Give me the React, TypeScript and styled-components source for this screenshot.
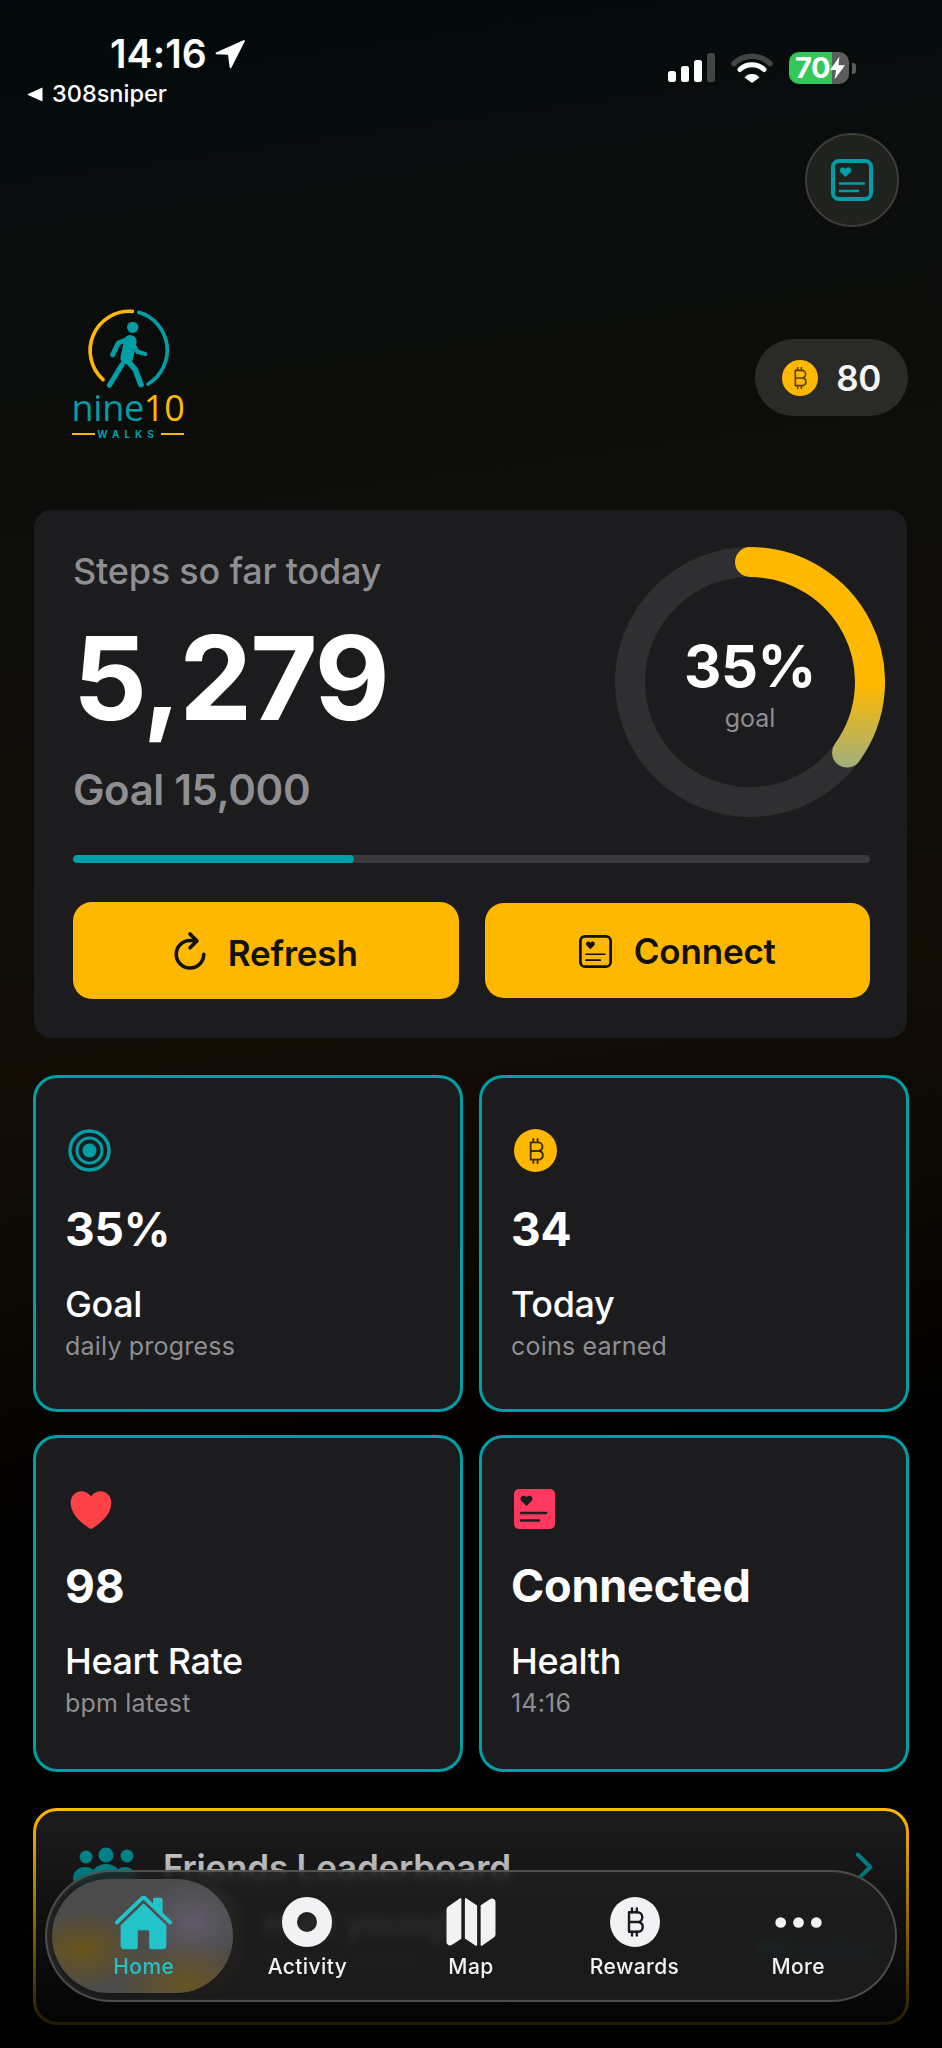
import React from "react";
import styled, { createGlobalStyle } from "styled-components";
import { IoHome, IoMap, IoEllipsisHorizontal, IoChevronForward, IoHeart } from "react-icons/io5";

const TEAL = "#009EA6";
const YELLOW = "#FFB800";
const CARD = "#1C1C1E";
const GREY = "#8E8E93";

const Global = createGlobalStyle`
  html, body { margin: 0; padding: 0; background: #000; }
  body { font-family: Inter, "Liberation Sans", sans-serif; color: #fff; }
  * { box-sizing: border-box; }
`;

const Page = styled.div`
  position: relative;
  width: 942px;
  height: 2048px;
  overflow: hidden;
  background: linear-gradient(172deg, #020a0d 0%, #0a0d0c 14%, #0d0d0a 26%, #120d05 50%, #0c0803 60%, #000 72%);
`;

/* status bar */
const StatusBar = styled.div`
  display: flex;
  justify-content: space-between;
  height: 110px;
  padding: 34px 86px 0 27px;
`;
const StatusLeft = styled.div`
  display: flex;
  flex-direction: column;
`;
const TimeRow = styled.div`
  display: flex;
  align-items: center;
  gap: 8px;
  margin-left: 83px;
  height: 40px;
  font-size: 39px;
  font-weight: 600;
  letter-spacing: 0.1px;
  line-height: 40px;
`;
const BackRow = styled.div`
  display: flex;
  align-items: center;
  gap: 9px;
  margin-top: 7px;
  height: 26px;
  font-size: 23.5px;
  font-weight: 500;
  line-height: 26px;
`;
const StatusRight = styled.div`
  display: flex;
  align-items: center;
  gap: 16px;
  height: 32px;
  margin-top: 18px;
`;
const BatteryWrap = styled.div`
  display: flex;
  align-items: center;
  gap: 3px;
`;
const BatteryBody = styled.div`
  display: flex;
  align-items: center;
  width: 60px;
  height: 32px;
  padding-left: 6px;
  border-radius: 10px;
  background: linear-gradient(90deg, #34c759 0 43px, #5c5c5c 43px);
  font-size: 29px;
  font-weight: 700;
  letter-spacing: -0.5px;
  line-height: 32px;
`;
const BatteryNub = styled.div`
  width: 4px;
  height: 11px;
  border-radius: 0 3px 3px 0;
  background: #5c5c5c;
`;

/* header */
const TopActions = styled.div`
  display: flex;
  justify-content: flex-end;
  margin-top: 23px;
  padding-right: 43px;
`;
const RoundButton = styled.div`
  display: flex;
  align-items: center;
  justify-content: center;
  width: 94px;
  height: 94px;
  border-radius: 50%;
  background: #20221f;
  border: 2px solid #3d3e38;
`;
const BrandRow = styled.div`
  display: flex;
  justify-content: space-between;
  align-items: flex-start;
  margin-top: 81px;
  padding: 0 34px 0 72px;
  height: 127px;
`;
const Logo = styled.div`
  display: flex;
  flex-direction: column;
  align-items: center;
  width: 112px;
`;
const LogoWord = styled.div`
  margin-top: 2px;
  height: 36px;
  font-family: "Open Sans", Inter, sans-serif;
  font-size: 36px;
  font-weight: 500;
  letter-spacing: -0.3px;
  line-height: 36px;
  color: ${TEAL};
  white-space: nowrap;
`;
const LogoAccent = styled.span`
  color: ${YELLOW};
`;
const LogoTag = styled.div`
  display: flex;
  align-items: center;
  justify-content: space-between;
  width: 112px;
  height: 10px;
  margin-top: 3px;
  font-size: 10px;
  font-weight: 700;
  letter-spacing: 5px;
  line-height: 10px;
  color: ${TEAL};
  &::before, &::after {
    content: "";
    width: 23px;
    height: 2px;
    background: ${YELLOW};
  }
`;
const CoinPill = styled.div`
  display: flex;
  align-items: center;
  gap: 18px;
  height: 77px;
  margin-top: 31px;
  padding: 0 27px 0 27px;
  border-radius: 39px;
  background: #2a2a28;
  font-size: 35px;
  font-weight: 600;
  letter-spacing: -0.4px;
  color: #f5f5f5;
`;
const Coin = styled.div<{ $size: number; $bg: string }>`
  display: flex;
  align-items: center;
  justify-content: center;
  flex: none;
  width: ${(p) => p.$size}px;
  height: ${(p) => p.$size}px;
  border-radius: 50%;
  background: ${(p) => p.$bg};
`;

/* hero */
const Hero = styled.section`
  margin: 75px 35px 0 34px;
  padding: 37px 37px 39px 39px;
  border-radius: 18px;
  background: ${CARD};
`;
const HeroTop = styled.div`
  display: flex;
  justify-content: space-between;
  height: 270px;
`;
const HeroText = styled.div`
  display: flex;
  flex-direction: column;
  padding-top: 4px;
`;
const StepsLabel = styled.div`
  font-size: 36px;
  font-weight: 500;
  line-height: 40px;
  letter-spacing: -0.2px;
  color: ${GREY};
`;
const StepsValue = styled.div`
  margin-top: 22px;
  font-size: 116px;
  font-weight: 700;
  line-height: 130px;
  letter-spacing: -2px;
`;
const StepsGoal = styled.div`
  margin-top: 22px;
  font-size: 42px;
  font-weight: 600;
  line-height: 50px;
  letter-spacing: -0.4px;
  color: ${GREY};
`;
const Ring = styled.div`
  display: grid;
  place-items: center;
  width: 270px;
  height: 270px;
  margin-right: -15px;
  & > * { grid-area: 1 / 1; }
`;
const RingCenter = styled.div`
  display: flex;
  flex-direction: column;
  align-items: center;
  margin-top: 3px;
`;
const RingValue = styled.div`
  font-size: 58px;
  font-weight: 700;
  line-height: 64px;
  letter-spacing: -0.5px;
`;
const RingLabel = styled.div`
  margin-top: 5px;
  font-size: 25px;
  font-weight: 400;
  line-height: 30px;
  color: ${GREY};
`;
const Progress = styled.div`
  height: 8px;
  margin-top: 38px;
  border-radius: 4px;
  background: #3a3a3c;
  overflow: hidden;
`;
const ProgressFill = styled.div`
  height: 100%;
  background: ${TEAL};
  border-radius: 4px;
`;
const Actions = styled.div`
  display: grid;
  grid-template-columns: 1fr 1fr;
  align-items: center;
  gap: 26px;
  margin-top: 39px;
`;
const ActionButton = styled.div<{ $height: number; $drop: number }>`
  display: flex;
  align-items: center;
  justify-content: center;
  gap: 22px;
  height: ${(p) => p.$height}px;
  padding-top: ${(p) => p.$drop}px;
  border-radius: 19px;
  background: ${YELLOW};
  color: #111;
  font-size: 35px;
  font-weight: 600;
  letter-spacing: -0.2px;
`;

/* stats */
const StatGrid = styled.div`
  display: grid;
  grid-template-columns: 430px 430px;
  gap: 23px 16px;
  margin: 37px 33px 0;
`;
const StatCard = styled.div`
  height: 337px;
  padding: 51px 29px 0;
  border: 3px solid ${TEAL};
  border-radius: 24px;
  background: ${CARD};
`;
const StatIcon = styled.div<{ $height: number }>`
  display: flex;
  align-items: flex-start;
  width: 46px;
  height: ${(p) => p.$height}px;
  margin-left: 3px;
`;
const HeartIcon = styled(IoHeart)`
  flex: none;
  margin: -4px 0 0 -2px;
`;
const StatValue = styled.div<{ $size?: number }>`
  margin-top: 29px;
  font-size: ${(p) => p.$size ?? 46}px;
  font-weight: 700;
  line-height: 56px;
  letter-spacing: -0.2px;
`;
const StatLabel = styled.div`
  margin-top: 25px;
  font-size: 36px;
  font-weight: 500;
  line-height: 44px;
  letter-spacing: -0.4px;
`;
const StatSub = styled.div`
  margin-top: 4px;
  font-size: 25px;
  font-weight: 400;
  line-height: 32px;
  letter-spacing: 0.2px;
  color: ${GREY};
`;

/* leaderboard */
const Board = styled.section`
  height: 217px;
  margin: 36px 33px 0;
  padding: 24px 20px 0 37px;
  border: 3px solid ${YELLOW};
  border-radius: 24px;
  background: ${CARD};
  overflow: hidden;
`;
const BoardHead = styled.div`
  display: flex;
  align-items: center;
  height: 64px;
`;
const PeopleIcon = styled.svg`
  flex: none;
  margin-top: 8px;
`;
const BoardTitle = styled.div`
  flex: 1;
  margin-left: 27px;
  font-size: 35px;
  font-weight: 600;
  letter-spacing: -0.2px;
  color: #e9e9eb;
  white-space: nowrap;
`;
const BoardRow = styled.div`
  display: flex;
  align-items: center;
  gap: 22px;
  margin-top: -14px;
  padding-right: 12px;
`;
const Medal = styled.div`
  flex: none;
  width: 52px;
  height: 52px;
  margin-left: -20px;
  margin-right: 38px;
  border-radius: 50%;
  background: ${YELLOW};
`;
const Avatar = styled.div`
  flex: none;
  width: 76px;
  height: 110px;
  border-radius: 38px;
  background: linear-gradient(180deg, #77727c, #8a5a2a);
`;
const RowText = styled.div`
  flex: 1;
  display: flex;
  flex-direction: column;
`;
const RowName = styled.div`
  font-size: 34px;
  font-weight: 600;
  line-height: 42px;
`;
const RowSteps = styled.div`
  font-size: 26px;
  line-height: 32px;
  color: ${GREY};
`;
const RowCoins = styled.div`
  margin-top: 20px;
  font-size: 28px;
  font-weight: 700;
  color: ${TEAL};
`;
const Fade = styled.div`
  position: absolute;
  left: 0;
  right: 0;
  top: 1810px;
  height: 238px;
  background: linear-gradient(180deg, rgba(0,0,0,0) 0%, rgba(0,0,0,0.88) 92%, rgba(0,0,0,0.9) 100%);
  pointer-events: none;
`;

/* nav */
const Nav = styled.nav`
  position: absolute;
  left: 45px;
  top: 1870px;
  width: 852px;
  height: 132px;
  display: flex;
  padding: 0 15px;
  border: 2px solid rgba(120, 120, 110, 0.55);
  border-radius: 66px;
  background: rgba(30, 30, 30, 0.84);
  backdrop-filter: blur(5px);
  box-shadow: inset 3px 0 4px rgba(255, 255, 255, 0.05);
`;
const NavItem = styled.div<{ $active?: boolean }>`
  position: relative;
  flex: 1;
  display: flex;
  flex-direction: column;
  align-items: center;
  padding-top: 25px;
  color: ${(p) => (p.$active ? "#22C3C9" : "#f2f2f4")};
  ${(p) =>
    p.$active
      ? `&::before {
    content: "";
    position: absolute;
    left: -10px;
    top: 7px;
    width: 181px;
    height: 114px;
    border-radius: 57px;
    background:
      radial-gradient(60px 40px at 17% 62%, rgba(110, 85, 20, 0.9), rgba(110, 85, 20, 0)),
      radial-gradient(70px 45px at 74% 92%, rgba(110, 85, 30, 0.85), rgba(110, 85, 30, 0)),
      radial-gradient(55px 45px at 78% 38%, rgba(98, 92, 108, 0.9), rgba(98, 92, 108, 0)),
      #4b4b4b;
  }`
      : ""}
`;
const NavIconBox = styled.div`
  position: relative;
  display: flex;
  align-items: center;
  justify-content: center;
  height: 50px;
`;
const NavLabel = styled.div`
  position: relative;
  margin-top: 7px;
  font-size: 21px;
  font-weight: 500;
  line-height: 26px;
  letter-spacing: 0.4px;
`;

const BitcoinGlyph = ({ size, color, sw = 1.6 }: { size: number; color: string; sw?: number }) => (
  <svg width={size} height={size} viewBox="0 0 24 24" fill="none" stroke={color} strokeWidth={sw} strokeLinecap="round" strokeLinejoin="round">
    <path d="M8 5.500h5.600a3.200 3.200 0 0 1 0 6.500H8h6.400a3.300 3.300 0 0 1 0 6.500H8z" />
    <path d="M10 3v2.500M13.200 3v2.500M10 18.500v2.500M13.200 18.500v2.500" />
  </svg>
);

const HealthCard = ({ size, color, sw }: { size: number; color: string; sw: number }) => (
  <svg width={size} height={size} viewBox="0 0 42 42" fill="none">
    <rect x={sw / 2} y={sw / 2} width={42 - sw} height={42 - sw} rx="6" stroke={color} strokeWidth={sw} />
    <path d="M14.500 18l-4.800-4.600a3 3 0 0 1 0-4.200 3 3 0 0 1 4.800 .9 3 3 0 0 1 4.800-.9 3 3 0 0 1 0 4.200z" fill={color} />
    <path d="M9 24.500h24M9 32h18" stroke={color} strokeWidth={sw * 0.62} strokeLinecap="round" />
  </svg>
);

const HealthFilled = () => (
  <svg width="41" height="40" viewBox="0 0 41 40">
    <rect width="41" height="40" rx="5" fill="#FF3860" />
    <path d="M12.500 17l-5-5a3.200 3.200 0 0 1 0-4.500 3.200 3.200 0 0 1 5 .8 3.200 3.200 0 0 1 5-.8 3.200 3.200 0 0 1 0 4.500z" fill="#1C1C1E" />
    <path d="M7 24h25M7 31.500h18" stroke="#1C1C1E" strokeWidth="2.600" strokeLinecap="round" />
  </svg>
);

const RefreshIcon = () => (
  <svg width="44" height="44" viewBox="0 0 512 512" fill="none" stroke="#111" strokeWidth="42" strokeLinecap="round" strokeLinejoin="round" style={{ margin: "-3px -6px 0" }}>
    <path d="M320 146s24.360-12-64-12a160 160 0 10160 160" />
    <path d="M256 58l80 80-80 80" />
  </svg>
);

const LogoMark = () => (
  <svg width="85" height="80" viewBox="110 55 255 240" fill="none" strokeLinecap="round" strokeLinejoin="round">
    <path d="M249 65A118 118 0 0 0 161 270" stroke={YELLOW} strokeWidth="11" />
    <path d="M268 68A118 118 0 0 1 296 283" stroke={TEAL} strokeWidth="11" />
    <circle cx="250" cy="113" r="17" fill={TEAL} />
    <g stroke={TEAL}>
      <path d="M243 155L232 205" strokeWidth="38" />
      <path d="M238 148L207 160L190 195" strokeWidth="15" />
      <path d="M252 165L264 186L288 193" strokeWidth="13" />
      <path d="M232 210L258 240L275 285" strokeWidth="17" />
      <path d="M218 225L180 287" strokeWidth="15" />
    </g>
  </svg>
);

const RingChart = ({ pct }: { pct: number }) => {
  const r = 120;
  const a = pct * 2 * Math.PI;
  const ex = 135 + r * Math.sin(a);
  const ey = 135 - r * Math.cos(a);
  return (
    <svg width="270" height="270" viewBox="0 0 270 270" fill="none">
      <defs>
        <linearGradient id="ringGrad" gradientUnits="userSpaceOnUse" x1="0" y1="138" x2="0" y2="218">
          <stop offset="0" stopColor={YELLOW} />
          <stop offset="1" stopColor="#A3B07A" />
        </linearGradient>
      </defs>
      <circle cx="135" cy="135" r={r} stroke="#2F2F31" strokeWidth="30" />
      <path
        d={`M135 15A${r} ${r} 0 0 1 ${ex} ${ey}`}
        stroke="url(#ringGrad)"
        strokeWidth="30"
        strokeLinecap="round"
      />
    </svg>
  );
};

export default function App() {
  return (
    <Page>
      <Global />
      <StatusBar>
        <StatusLeft>
          <TimeRow>
            14:16
            <svg width="30" height="30" viewBox="0 0 30 30" fill="#fff">
              <path d="M28.500 1.200L1 13.500c-.8.500-.5 1.600.4 1.700L13 15.800l1.700 12.700c.2 1 1.300 1.100 1.700.2L29.700 2.500c.4-1-.4-1.700-1.200-1.300z" />
            </svg>
          </TimeRow>
          <BackRow>
            <svg width="16" height="17" viewBox="0 0 16 16" fill="#fff">
              <path d="M15.500 1v14L1 8.500c-.6-.3-.6-.7 0-1z" />
            </svg>
            308sniper
          </BackRow>
        </StatusLeft>
        <StatusRight>
          <svg width="47" height="30" viewBox="0 0 47 30">
            <rect x="0" y="18" width="8" height="11" rx="2.500" fill="#fff" />
            <rect x="13" y="13" width="8" height="16" rx="2.500" fill="#fff" />
            <rect x="26" y="7" width="8" height="22" rx="2.500" fill="#fff" />
            <rect x="39" y="0" width="8" height="29" rx="2.500" fill="#444" />
          </svg>
          <svg width="42" height="30" viewBox="0 0 42 30" fill="none">
            <path d="M3 10.500A26 26 0 0 1 39 10.500" stroke="#444" strokeWidth="5.500" strokeLinecap="round" />
            <path d="M9 16.500A17.500 17.500 0 0 1 33 16.500" stroke="#fff" strokeWidth="5" strokeLinecap="round" />
            <path d="M13.500 24.500A10 10 0 0 1 28.500 24.500L21 30z" fill="#fff" />
          </svg>
          <BatteryWrap>
            <BatteryBody>
              70
              <svg width="15" height="24" viewBox="0 0 16 24" fill="#fff">
                <path d="M10 0L0 14h6.500L5 24l11-15H9z" />
              </svg>
            </BatteryBody>
            <BatteryNub />
          </BatteryWrap>
        </StatusRight>
      </StatusBar>

      <TopActions>
        <RoundButton>
          <HealthCard size={42} color={TEAL} sw={4} />
        </RoundButton>
      </TopActions>

      <BrandRow>
        <Logo>
          <LogoMark />
          <LogoWord>
            nine<LogoAccent>10</LogoAccent>
          </LogoWord>
          <LogoTag>WALKS</LogoTag>
        </Logo>
        <CoinPill>
          <Coin $size={36} $bg={YELLOW}>
            <BitcoinGlyph size={28} color="#5b4000" sw={1.4} />
          </Coin>
          80
        </CoinPill>
      </BrandRow>

      <Hero>
        <HeroTop>
          <HeroText>
            <StepsLabel>Steps so far today</StepsLabel>
            <StepsValue>5,279</StepsValue>
            <StepsGoal>Goal 15,000</StepsGoal>
          </HeroText>
          <Ring>
            <RingChart pct={0.35} />
            <RingCenter>
              <RingValue>35%</RingValue>
              <RingLabel>goal</RingLabel>
            </RingCenter>
          </Ring>
        </HeroTop>
        <Progress>
          <ProgressFill style={{ width: "35.2%" }} />
        </Progress>
        <Actions>
          <ActionButton $height={97} $drop={4}>
            <RefreshIcon />
            Refresh
          </ActionButton>
          <ActionButton $height={95} $drop={1}>
            <HealthCard size={33} color="#111" sw={3.500} />
            Connect
          </ActionButton>
        </Actions>
      </Hero>

      <StatGrid>
        <StatCard>
          <StatIcon $height={43}>
            <svg width="43" height="43" viewBox="0 0 43 43" fill="none">
              <circle cx="21.500" cy="21.500" r="19.500" stroke={TEAL} strokeWidth="3.500" />
              <circle cx="21.500" cy="21.500" r="12.500" stroke={TEAL} strokeWidth="3" />
              <circle cx="21.500" cy="21.500" r="7" fill={TEAL} />
            </svg>
          </StatIcon>
          <StatValue>35%</StatValue>
          <StatLabel>Goal</StatLabel>
          <StatSub>daily progress</StatSub>
        </StatCard>
        <StatCard>
          <StatIcon $height={43}>
            <Coin $size={43} $bg={YELLOW}>
              <BitcoinGlyph size={32} color="#3a2c00" sw={1.4} />
            </Coin>
          </StatIcon>
          <StatValue>34</StatValue>
          <StatLabel>Today</StatLabel>
          <StatSub>coins earned</StatSub>
        </StatCard>
        <StatCard>
          <StatIcon $height={40}>
            <HeartIcon size={50} color="#FF4245" />
          </StatIcon>
          <StatValue>98</StatValue>
          <StatLabel>Heart Rate</StatLabel>
          <StatSub>bpm latest</StatSub>
        </StatCard>
        <StatCard>
          <StatIcon $height={40}>
            <HealthFilled />
          </StatIcon>
          <StatValue $size={45}>Connected</StatValue>
          <StatLabel>Health</StatLabel>
          <StatSub>14:16</StatSub>
        </StatCard>
      </StatGrid>

      <Board>
        <BoardHead>
          <PeopleIcon width="63" height="48" viewBox="0 0 63 48" fill={TEAL}>
            <circle cx="13" cy="10" r="6.500" />
            <circle cx="33" cy="8" r="7.500" />
            <circle cx="54" cy="9" r="6.500" />
            <ellipse cx="12" cy="31" rx="12" ry="11" />
            <ellipse cx="33" cy="30" rx="15" ry="13" />
            <ellipse cx="52" cy="31" rx="11" ry="11" />
          </PeopleIcon>
          <BoardTitle>Friends Leaderboard</BoardTitle>
          <IoChevronForward size={44} color={TEAL} />
        </BoardHead>
        <BoardRow>
          <Medal />
          <Avatar />
          <RowText>
            <RowName>matt young</RowName>
            <RowSteps>12,080 steps</RowSteps>
          </RowText>
          <RowCoins>80 coins</RowCoins>
        </BoardRow>
      </Board>
      <Fade />

      <Nav>
        <NavItem $active>
          <NavIconBox>
            <IoHome size={61} />
          </NavIconBox>
          <NavLabel>Home</NavLabel>
        </NavItem>
        <NavItem>
          <NavIconBox>
            <svg width="50" height="50" viewBox="0 0 50 50">
              <circle cx="25" cy="25" r="17.500" fill="none" stroke="#f2f2f4" strokeWidth="15" />
            </svg>
          </NavIconBox>
          <NavLabel>Activity</NavLabel>
        </NavItem>
        <NavItem>
          <NavIconBox>
            <IoMap size={56} />
          </NavIconBox>
          <NavLabel>Map</NavLabel>
        </NavItem>
        <NavItem>
          <NavIconBox>
            <Coin $size={50} $bg="#f2f2f4">
              <BitcoinGlyph size={36} color="#1c1c1e" />
            </Coin>
          </NavIconBox>
          <NavLabel>Rewards</NavLabel>
        </NavItem>
        <NavItem>
          <NavIconBox>
            <IoEllipsisHorizontal size={57} />
          </NavIconBox>
          <NavLabel>More</NavLabel>
        </NavItem>
      </Nav>
    </Page>
  );
}
